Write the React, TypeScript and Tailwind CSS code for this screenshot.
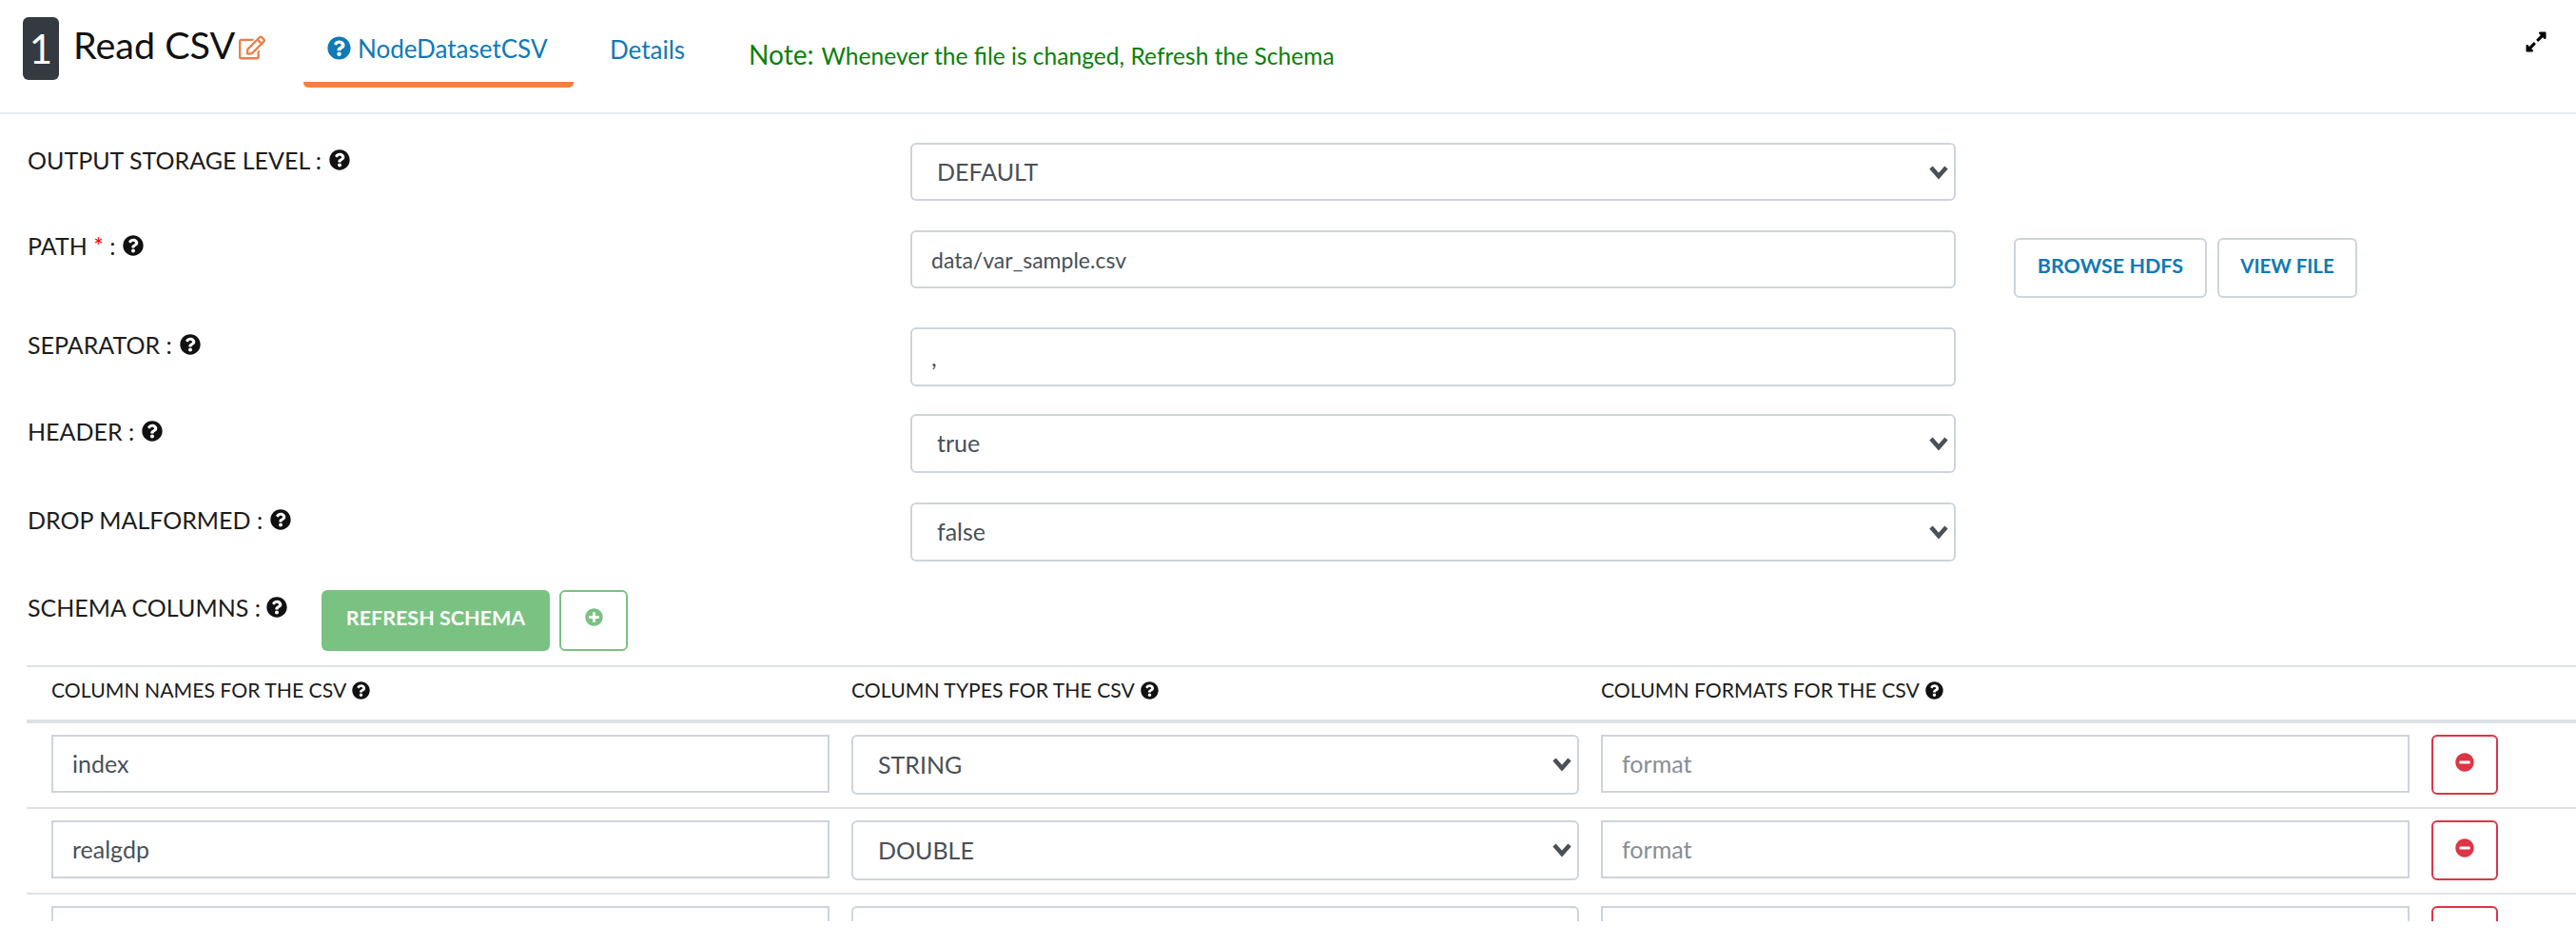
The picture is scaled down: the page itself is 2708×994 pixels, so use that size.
import { FaExpandAlt, FaMinusCircle, FaPlusCircle, FaQuestionCircle, FaRegEdit } from "react-icons/fa";

const rows = [
  { name: "index", type: "STRING" },
  { name: "realgdp", type: "DOUBLE" },
  { name: "realcons", type: "DOUBLE" },
];

function Help({ className }: { className: string }) {
  return <FaQuestionCircle className={`shrink-0 text-[#111] ${className}`} />;
}

function Chevron() {
  return (
    <svg viewBox="0 0 20 18" className="pointer-events-none absolute right-[8px] top-[23px] h-[18px] w-[20px] text-[#495057]">
      <path d="M2 3l8 9 8-9" fill="none" stroke="currentColor" strokeWidth="4.5" />
    </svg>
  );
}

function Select({ value, className }: { value: string; className: string }) {
  return (
    <div className={`relative ${className}`}>
      <select
        defaultValue={value}
        className="h-full w-full appearance-none rounded-[6px] border-2 border-[#ced4da] bg-white pl-[26px] text-[25px] text-[#495057] outline-none"
      >
        <option>{value}</option>
      </select>
      <Chevron />
    </div>
  );
}

function FormRow({
  label,
  required,
  labelTop,
  className,
  children,
}: {
  label: string;
  required?: boolean;
  labelTop: string;
  className: string;
  children: React.ReactNode;
}) {
  return (
    <div className={`flex items-start ${className}`}>
      <div className={`flex w-[957px] items-center pl-[29px] text-[25px] leading-[36px] text-[#1c1c1c] ${labelTop}`}>
        <span className="whitespace-pre">
          {label}
          {required ? <span className="text-[#ff0000]"> *</span> : null} :
        </span>
        <Help className="ml-[8px] h-[22px] w-[22px]" />
      </div>
      {children}
    </div>
  );
}

export default function App() {
  return (
    <div className="h-[968px] overflow-hidden bg-white font-['Lato',sans-serif]">
      <header className="flex h-[120px] items-start border-b-2 border-[#e9ecef]">
        <div className="ml-[24px] mt-[18px] flex h-[66px] w-[38px] items-center justify-center rounded-[6px] bg-[#343a40] text-[42px] text-white">
          1
        </div>
        <div className="ml-[15px] mt-[22px] w-[174px] text-[39.5px] leading-[50px] text-[#111]">Read CSV</div>
        <FaRegEdit className="mt-[36px] h-[28px] w-[28px] text-[#e8804a]" />
        <div className="ml-[40px] flex h-[92px] w-[284px] items-start rounded-b-[5px] border-b-[6px] border-[#f5804a] pl-[25px] pt-[38px]">
          <FaQuestionCircle className="h-[25px] w-[25px] text-[#0f7ab5]" />
          <span className="ml-[7px] text-[26px] leading-[26px] text-[#0f7ab5]">NodeDatasetCSV</span>
        </div>
        <div className="ml-[38px] mt-[36px] text-[26px] leading-[32px] text-[#0f7ab5]">Details</div>
        <div className="ml-[67px] mt-[38px] flex items-baseline text-[#0a800a]">
          <span className="text-[28px] leading-[38px]">Note:</span>
          <span className="ml-[8px] text-[24.6px] leading-[38px]">Whenever the file is changed, Refresh the Schema</span>
        </div>
        <FaExpandAlt className="ml-auto mr-[30px] mt-[32px] h-[24px] w-[24px] text-black" />
      </header>

      <FormRow label="OUTPUT STORAGE LEVEL" labelTop="mt-0" className="mt-[30px] h-[61px]">
        <Select value="DEFAULT" className="h-[61px] w-[1099px]" />
      </FormRow>

      <FormRow label="PATH" required labelTop="-mt-[2px]" className="mt-[31px] h-[61px]">
        <input
          defaultValue="data/var_sample.csv"
          className="h-[61px] w-[1099px] rounded-[6px] border-2 border-[#ced4da] px-[20px] text-[23px] text-[#495057] outline-none"
        />
        <button className="ml-[61px] mt-[8px] h-[63px] w-[203px] rounded-[6px] border-2 border-[#ced4da] pb-[4px] text-[21.5px] font-bold text-[#0f7ab5]">
          BROWSE HDFS
        </button>
        <button className="ml-[11px] mt-[8px] h-[63px] w-[147px] rounded-[6px] border-2 border-[#ced4da] pb-[4px] text-[20.5px] font-bold text-[#0f7ab5]">
          VIEW FILE
        </button>
      </FormRow>

      <FormRow label="SEPARATOR" labelTop="mt-0" className="mt-[41px] h-[62px]">
        <input
          defaultValue=","
          className="h-[62px] w-[1099px] rounded-[6px] border-2 border-[#ced4da] px-[20px] text-[25px] text-[#495057] outline-none"
        />
      </FormRow>

      <FormRow label="HEADER" labelTop="mt-0" className="mt-[29px] h-[62px]">
        <Select value="true" className="h-[62px] w-[1099px]" />
      </FormRow>

      <FormRow label="DROP MALFORMED" labelTop="mt-0" className="mt-[31px] h-[62px]">
        <Select value="false" className="h-[62px] w-[1099px]" />
      </FormRow>

      <div className="mt-[30px] flex h-[64px] items-start">
        <div className="flex w-[338px] items-center pl-[29px] text-[25px] leading-[36px] text-[#1c1c1c]">
          <span>SCHEMA COLUMNS :</span>
          <Help className="ml-[6px] h-[22px] w-[22px]" />
        </div>
        <button className="h-[64px] w-[240px] rounded-[6px] bg-[#7ac282] pb-[6px] text-[21.5px] font-bold text-white">
          REFRESH SCHEMA
        </button>
        <button className="ml-[10px] flex h-[64px] w-[72px] items-center justify-center rounded-[6px] border-2 border-[#7ac282] pb-[8px]">
          <FaPlusCircle className="h-[19px] w-[19px] text-[#7ac282]" />
        </button>
      </div>

      <div className="ml-[28px] mt-[15px] border-t-2 border-[#dee2e6]">
        <div className="grid h-[59px] grid-cols-[818px_765px_850px_70px] items-center gap-x-[23px] border-b-4 border-[#dee2e6] pb-[6px] pl-[26px] text-[21.2px] text-[#1c1c1c]">
          <div className="flex items-center">
            COLUMN NAMES FOR THE CSV
            <Help className="ml-[6px] h-[19px] w-[19px]" />
          </div>
          <div className="flex items-center">
            COLUMN TYPES FOR THE CSV
            <Help className="ml-[6px] h-[19px] w-[19px]" />
          </div>
          <div className="flex items-center">
            COLUMN FORMATS FOR THE CSV
            <Help className="ml-[6px] h-[19px] w-[19px]" />
          </div>
        </div>
        {rows.map((row) => (
          <div
            key={row.name}
            className="grid h-[90px] grid-cols-[818px_765px_850px_70px] items-start gap-x-[23px] border-b-2 border-[#dee2e6] pl-[26px] pt-[12px]"
          >
            <input
              defaultValue={row.name}
              className="h-[61px] w-full border-2 border-[#ced4da] px-[20px] pb-[2px] text-[25px] text-[#495057] outline-none"
            />
            <Select value={row.type} className="h-[63px] w-full" />
            <input
              placeholder="format"
              className="h-[61px] w-full border-2 border-[#ced4da] px-[20px] pb-[2px] text-[25px] text-[#495057] outline-none placeholder:text-[#868e96]"
            />
            <button className="flex h-[63px] w-full items-center justify-center rounded-[6px] border-2 border-[#dc3545] pb-[6px]">
              <FaMinusCircle className="h-[20px] w-[20px] text-[#dc3545]" />
            </button>
          </div>
        ))}
      </div>
    </div>
  );
}
